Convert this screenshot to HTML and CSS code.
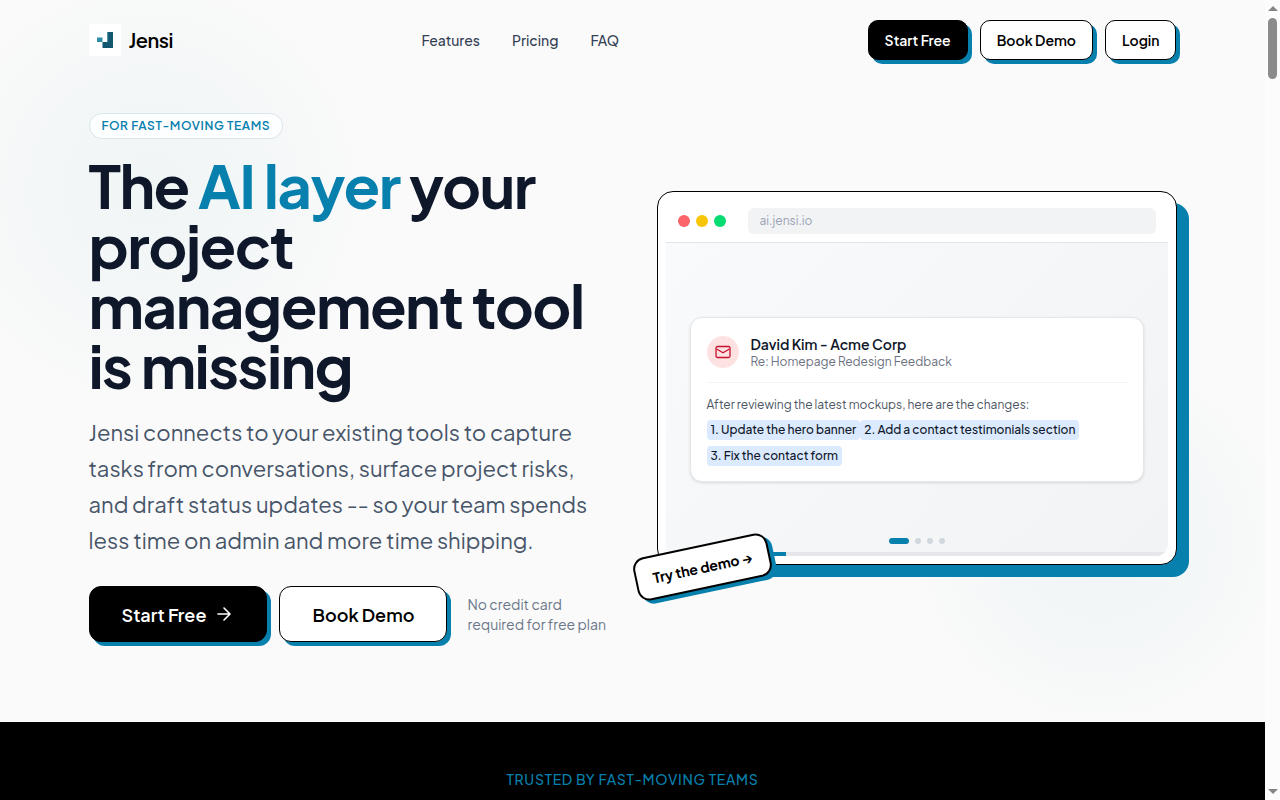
FILE: index.html
```html
<!DOCTYPE html>
<html lang="en">
<head>
<meta charset="utf-8">
<meta name="viewport" content="width=device-width, initial-scale=1">
<title>Jensi</title>
<link rel="stylesheet" href="styles.css">
</head>
<body>
<div class="shell">
  <div class="page">
    <div class="top">
      <header class="container nav">
        <a class="brand" href="#">
          <span class="brand-mark">
            <svg viewBox="0 0 32 32" width="32" height="32" aria-hidden="true">
              <path fill="#2f8fa8" d="M8 13.500h5.500V18H8z"/>
              <path fill="#12566f" d="M18.500 8H24v16H13.500v-6h5z"/>
              <path fill="#1d7490" d="M18.500 8h1v11h-1z"/>
            </svg>
          </span>
          <span class="brand-name">Jensi</span>
        </a>
        <nav class="links" aria-label="Main">
          <a href="#">Features</a>
          <a href="#">Pricing</a>
          <a href="#">FAQ</a>
        </nav>
        <div class="nav-actions">
          <button class="btn btn-dark" type="button">Start Free</button>
          <button class="btn" type="button">Book Demo</button>
          <button class="btn" type="button">Login</button>
        </div>
      </header>

      <main class="container hero">
        <div class="copy">
          <span class="badge">FOR FAST-MOVING TEAMS</span>
          <h1>The <em>AI layer</em> your project management tool is&nbsp;missing</h1>
          <p class="lead">Jensi connects to your existing tools to capture tasks from conversations, surface project risks, and draft status updates -- so your team spends less time on admin and more time shipping.</p>
          <div class="cta">
            <button class="btn btn-large btn-dark" type="button">Start Free
              <svg class="arrow" viewBox="0 0 20 20" width="20" height="20" aria-hidden="true"><path d="M4 10h12M10 4l6 6-6 6"/></svg>
            </button>
            <button class="btn btn-large" type="button">Book Demo</button>
            <p class="note">No credit card required for free plan</p>
          </div>
        </div>

        <div class="demo">
          <div class="demo-bar">
            <div class="lights"><i class="red"></i><i class="yellow"></i><i class="green"></i></div>
            <div class="address">ai.jensi.io</div>
          </div>
          <div class="stage">
            <article class="mail">
              <header class="mail-head">
                <span class="avatar">
                  <svg viewBox="0 0 16 16" width="16" height="16" aria-hidden="true"><rect x="1" y="2.500" width="14" height="11" rx="1.500"/><path d="M1.500 5 8 8.800 14.500 5"/></svg>
                </span>
                <div>
                  <h2>David Kim - Acme Corp</h2>
                  <p>Re: Homepage Redesign Feedback</p>
                </div>
              </header>
              <p class="mail-intro">After reviewing the latest mockups, here are the changes:</p>
              <p class="mail-items"><mark>1. Update the hero banner</mark><mark>2. Add a contact testimonials section</mark><mark>3. Fix the contact form</mark></p>
            </article>
            <div class="dots"><i class="on"></i><i></i><i></i><i></i></div>
            <div class="progress"><div></div></div>
          </div>
          <a class="sticker" href="#">Try the demo →</a>
        </div>
      </main>
    </div>
    <section class="trusted">TRUSTED BY FAST-MOVING TEAMS</section>
  </div>
  <div class="scrollbar" aria-hidden="true"><i class="up"></i><i class="thumb"></i><i class="down"></i></div>
</div>
</body>
</html>
```
FILE: styles.css
```css
:root {
  --accent: #0880ae;
  --ink: #0f172a;
}
* { box-sizing: border-box; }
body {
  margin: 0;
  font-family: "Plus Jakarta Sans", Inter, sans-serif;
  color: var(--ink);
  background: #fafafa;
}
h1, h2, p { margin: 0; }
a { color: inherit; text-decoration: none; }
button { font-family: inherit; cursor: pointer; }

.shell { display: flex; height: 100vh; }
.page { flex: 1; min-width: 0; overflow: hidden; }
.container { max-width: 1152px; margin: 0 auto; padding: 0 32px; }
.top {
  background:
    radial-gradient(circle at 150px 190px, rgba(8, 128, 150, 0.045), rgba(8, 128, 160, 0.022) 120px, transparent 220px),
    radial-gradient(circle at calc(100% - 165px) 540px, rgba(8, 128, 150, 0.045), rgba(8, 128, 160, 0.022) 110px, transparent 190px),
    #fafafa;
}

.nav { display: flex; align-items: center; justify-content: space-between; height: 80px; }
.brand { display: flex; align-items: center; gap: 8px; color: #000; }
.brand-mark { display: flex; background: #fff; }
.brand-name { font-size: 20px; font-weight: 600; line-height: 28px; letter-spacing: -0.025em; }
.links { display: flex; gap: 32px; font-size: 14px; font-weight: 500; line-height: 20px; color: #334155; }
.nav-actions { display: flex; gap: 12px; }

.btn {
  display: flex;
  align-items: center;
  justify-content: center;
  height: 40px;
  padding: 0 16px;
  border: 1px solid #000;
  border-radius: 10px;
  background: #fff;
  color: #000;
  font-size: 14px;
  font-weight: 600;
  white-space: nowrap;
  box-shadow: 4px 4px 0 var(--accent);
}
.btn-dark { background: #000; color: #fff; }
.btn-large { height: 56px; padding: 0 32px; gap: 8px; font-size: 18px; border-radius: 12px; }
.arrow { fill: none; stroke: currentColor; stroke-width: 1.600; stroke-linecap: round; stroke-linejoin: round; }

.hero {
  display: grid;
  grid-template-columns: 1fr 1fr;
  gap: 48px;
  align-items: center;
  padding-top: 33px;
  padding-bottom: 80px;
}
.badge {
  display: inline-block;
  padding: 0 12px;
  border: 1px solid #dbe6ec;
  border-radius: 999px;
  background: #fcfeff;
  color: var(--accent);
  font-size: 12px;
  font-weight: 600;
  line-height: 24px;
  letter-spacing: 0.05em;
}
h1 { margin-top: 16px; font-size: 60px; font-weight: 700; line-height: 60px; letter-spacing: -0.025em; }
h1 em { font-style: normal; color: var(--accent); }
.lead { margin-top: 19px; font-size: 22px; line-height: 36px; color: #475569; }
.cta { display: flex; align-items: center; gap: 12px; margin-top: 28px; }
.note { margin-left: 8px; font-size: 14px; line-height: 20px; color: #6b7789; }

.demo {
  position: relative;
  padding: 8px;
  border: 1px solid #000;
  border-radius: 16px;
  background: #fff;
  box-shadow: 12px 12px 0 var(--accent);
}
.demo-bar {
  display: flex;
  align-items: center;
  gap: 22px;
  padding: 8px 12px;
  border-bottom: 1px solid #e2e6eb;
}
.lights { display: flex; gap: 6px; }
.lights i { width: 12px; height: 12px; border-radius: 50%; }
.red { background: #fb6469; }
.yellow { background: #f8c505; }
.green { background: #06dc72; }
.address {
  flex: 1;
  padding: 0 12px;
  border-radius: 6px;
  background: #f2f3f5;
  color: #98a2b3;
  font-size: 12px;
  line-height: 26px;
}
.stage {
  position: relative;
  display: flex;
  flex-direction: column;
  justify-content: center;
  aspect-ratio: 502 / 313;
  padding: 0 24px;
  overflow: hidden;
  border-radius: 0 0 12px 12px;
  background: linear-gradient(135deg, #f9fafb, #f2f3f5);
}
.mail {
  padding: 16px 16px 12px;
  border: 1px solid #e5e7eb;
  border-radius: 12px;
  background: #fff;
  box-shadow: 0 1px 3px rgba(0, 0, 0, 0.12);
}
.mail-head { display: flex; align-items: center; gap: 12px; padding-bottom: 12px; border-bottom: 1px solid #f3f4f6; }
.mail-head h2 { font-size: 14px; font-weight: 600; line-height: 20px; }
.mail-head p { font-size: 12px; line-height: 16px; color: #6b7280; }
.avatar { display: grid; place-items: center; width: 32px; height: 32px; border-radius: 50%; background: #fee2e2; }
.avatar svg { fill: none; stroke: #c5112f; stroke-width: 1.300; stroke-linejoin: round; }
.mail-intro { margin-top: 12px; font-size: 12px; line-height: 20px; color: #4b5563; }
.mail-items { font-size: 12px; line-height: 26px; color: var(--ink); margin-top: 2px; }
mark { display: inline-block; padding: 0 4px; border-radius: 4px; background: #dbeafe; color: inherit; line-height: 20px; font-weight: 500; }
.dots { position: absolute; left: 0; right: 0; bottom: 12px; display: flex; justify-content: center; gap: 6px; }
.dots i { width: 6px; height: 6px; border-radius: 3px; background: #d1d7df; }
.dots .on { width: 20px; background: var(--accent); }
.progress { position: absolute; left: 0; right: 0; bottom: 0; background: #e5e7eb; }
.progress div { width: 24%; height: 4px; background: var(--accent); }
.sticker {
  position: absolute;
  left: -24px;
  bottom: -25px;
  padding: 10px 16px;
  border: 2px solid #000;
  border-radius: 12px;
  background: #fff;
  color: #000;
  font-size: 14px;
  font-weight: 700;
  line-height: 20px;
  white-space: nowrap;
  box-shadow: 4px 4px 0 var(--accent);
  transform: rotate(-12deg);
}

.trusted {
  min-height: 400px;
  padding-top: 47px;
  background: #000;
  color: var(--accent);
  text-align: center;
  font-size: 14px;
  font-weight: 500;
  line-height: 20px;
  letter-spacing: 0.05em;
}

.scrollbar { display: flex; flex-direction: column; align-items: center; width: 15px; padding: 6px 0; background: #fcfcfc; }
.up, .down { border: 5px solid transparent; }
.up { border-top: 0; border-bottom-color: #858585; }
.thumb { width: 9px; height: 61px; margin-top: 7px; border-radius: 5px; background: #8b8b8b; }
.down { margin-top: auto; border-bottom: 0; border-top-color: #858585; }
```
